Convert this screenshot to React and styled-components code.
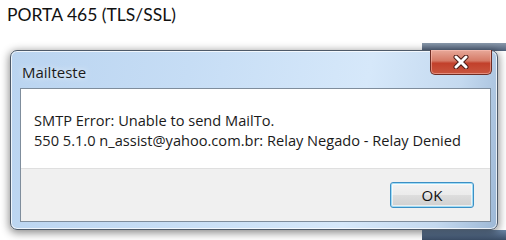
import React from 'react'
import styled, { createGlobalStyle } from 'styled-components'

const GlobalStyle = createGlobalStyle`
  body {
    margin: 0;
    background: #ffffff;
  }
`

const Page = styled.div`
  width: 506px;
  height: 240px;
  overflow: hidden;
  display: flex;
  flex-direction: column;
`

const Heading = styled.div`
  height: 43px;
  padding: 4px 0 0 7px;
  box-sizing: border-box;
  font-family: Lato, 'Open Sans', sans-serif;
  font-size: 17.5px;
  color: #111;
`

const Stage = styled.div`
  flex: 1;
  padding: 7px 8px 0 10px;
  background:
    linear-gradient(180deg, #8a99ab 0%, #4f6079 100%) right top / 84px 8px no-repeat,
    linear-gradient(180deg, #6c86a6 0%, #3a4d66 100%) right bottom / 84px 10px no-repeat,
    #ffffff;
`

const Window = styled.div`
  width: 488px;
  height: 180px;
  box-sizing: border-box;
  border: 1px solid #4e5a69;
  border-radius: 7px;
  padding: 0 6px 7px 9px;
  display: flex;
  flex-direction: column;
  background: linear-gradient(100deg, #bad4f0 0%, #c6ddf5 35%, #d6e8fa 70%, #c4d9ef 88%, #9db8d6 100%);
  box-shadow: inset 0 0 0 1px rgba(255, 255, 255, 0.75), 0 2px 8px 1px rgba(0, 0, 0, 0.45);
`

const TitleBar = styled.div`
  height: 37px;
  display: flex;
  justify-content: space-between;
  align-items: flex-start;
`

const Caption = styled.span`
  margin-top: 11px;
  padding-left: 2px;
  font-family: 'Open Sans', sans-serif;
  font-size: 15px;
  color: #1b1b1b;
  text-shadow: 0 0 6px rgba(255, 255, 255, 0.9);
`

const CloseButton = styled.div`
  width: 62px;
  height: 25px;
  margin: -1px -1px 0 0;
  box-sizing: border-box;
  border: 1px solid #6e2d24;
  border-top: none;
  border-radius: 0 0 5px 5px;
  display: flex;
  align-items: center;
  justify-content: center;
  background: linear-gradient(180deg, #e8a99a 0%, #d57a66 45%, #c2402b 55%, #c9563f 100%);
  box-shadow: inset 0 0 0 1px rgba(255, 200, 190, 0.5);
`

const Client = styled.div`
  flex: 1;
  display: flex;
  flex-direction: column;
  border: 1px solid #7f8d9c;
  background: #ffffff;
`

const Message = styled.div`
  height: 79px;
  box-sizing: border-box;
  padding: 21px 0 0 13px;
  font-family: 'Open Sans', sans-serif;
  font-size: 14.6px;
  line-height: 20px;
  color: #1a1a1a;
`

const Footer = styled.div`
  flex: 1;
  display: flex;
  justify-content: flex-end;
  align-items: center;
  padding-right: 16px;
  border-top: 1px solid #dfdfdf;
  background: #f0f0f0;
`

const Button = styled.button`
  width: 84px;
  height: 26px;
  border: 1px solid #3c8fc4;
  border-radius: 3px;
  background: linear-gradient(180deg, #f3f3f3 0%, #ebebeb 50%, #dddddd 51%, #cfcfcf 100%);
  box-shadow: inset 0 0 0 1px #9fdcf6, inset 0 0 0 2px rgba(255, 255, 255, 0.6);
  font-family: 'Open Sans', sans-serif;
  font-size: 15px;
  color: #111;
  padding: 0;
`

const CloseIcon = () => (
  <svg width="18" height="14" viewBox="0 0 18 14">
    <path
      d="M4 2 L14 12 M14 2 L4 12"
      stroke="#4a1c16"
      strokeWidth="5"
      strokeLinecap="round"
    />
    <path
      d="M4 2 L14 12 M14 2 L4 12"
      stroke="#ffffff"
      strokeWidth="3"
      strokeLinecap="round"
    />
  </svg>
)

export default function App() {
  return (
    <Page>
      <GlobalStyle />
      <Heading>PORTA 465 (TLS/SSL)</Heading>
      <Stage>
        <Window>
          <TitleBar>
            <Caption>Mailteste</Caption>
            <CloseButton>
              <CloseIcon />
            </CloseButton>
          </TitleBar>
          <Client>
            <Message>
              SMTP Error: Unable to send MailTo.
              <br />
              550 5.1.0 n_assist@yahoo.com.br: Relay Negado - Relay Denied
            </Message>
            <Footer>
              <Button>OK</Button>
            </Footer>
          </Client>
        </Window>
      </Stage>
    </Page>
  )
}
